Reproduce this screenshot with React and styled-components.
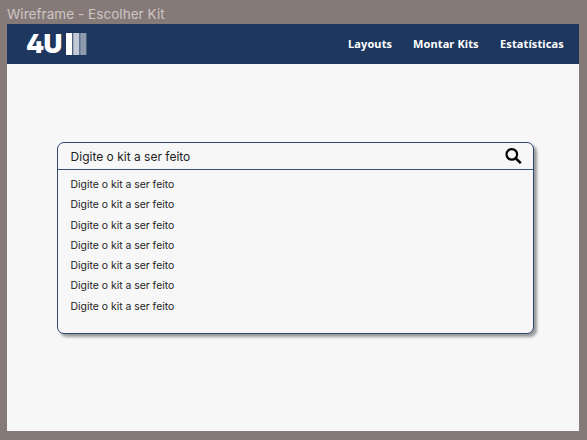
import React from "react";
import styled, { createGlobalStyle } from "styled-components";

const GlobalStyle = createGlobalStyle`
  * { box-sizing: border-box; }
  body { margin: 0; background: #867a79; }
`;

const Canvas = styled.div`
  width: 587px;
  height: 440px;
  padding: 0 8px 9px 7px;
  display: flex;
  flex-direction: column;
  overflow: hidden;
  background: #867a79;
  font-family: Inter, sans-serif;
`;

const FrameTitle = styled.div`
  height: 24px;
  flex: none;
  padding-top: 4px;
  font-size: 13.5px;
  line-height: 20px;
  letter-spacing: 0.05px;
  white-space: nowrap;
  color: #cdc5c4;
`;

const Frame = styled.main`
  flex: 1;
  display: flex;
  flex-direction: column;
  background: #f7f7f7;
`;

const Header = styled.header`
  height: 40px;
  flex: none;
  display: flex;
  align-items: center;
  justify-content: space-between;
  padding: 0 14px 0 19px;
  background: #1e375f;
`;

const Logo = styled.div`
  display: flex;
  align-items: center;
  gap: 4px;
  color: #fff;
`;

const LogoText = styled.span`
  width: 36px;
  font-size: 26px;
  font-weight: 900;
  font-feature-settings: "cv02";
  line-height: 40px;
  letter-spacing: -0.7px;
`;

const Nav = styled.nav`
  display: flex;
  gap: 21px;
`;

const NavLink = styled.a`
  width: ${(p) => p.$width}px;
  font-family: "Noto Sans", sans-serif;
  font-size: 11px;
  font-weight: 700;
  line-height: 40px;
  letter-spacing: 0.12px;
  white-space: nowrap;
  color: #fff;
`;

const SearchPanel = styled.section`
  width: 477px;
  height: 192px;
  margin: 78px 0 0 50px;
  border: 1px solid #2e4773;
  border-radius: 7px;
  box-shadow: 3px 3px 3px rgba(0, 0, 0, 0.38);
  background: #f7f7f7;
`;

const SearchBar = styled.div`
  height: 27px;
  display: flex;
  align-items: center;
  justify-content: space-between;
  padding: 0 11px 0 12.6px;
  border-bottom: 1px solid #365582;
  font-size: 12px;
  color: #222;
`;

const Results = styled.ul`
  margin: 0;
  padding: 5px 12.6px;
  list-style: none;
`;

const Result = styled.li`
  height: 20.25px;
  font-size: 10.4px;
  line-height: 20px;
  color: #222;
`;

const links = [
  { label: "Layouts", width: 44 },
  { label: "Montar Kits", width: 66 },
  { label: "Estatísticas", width: 65 },
];

export default function App() {
  return (
    <Canvas>
      <GlobalStyle />
      <FrameTitle>Wireframe - Escolher Kit</FrameTitle>
      <Frame>
        <Header>
          <Logo>
            <LogoText>4U</LogoText>
            <svg width="21" height="22" viewBox="0 0 21 22" aria-hidden="true">
              <rect width="6.2" height="22" fill="#fff" />
              <rect x="7.2" width="6.2" height="22" fill="#c2c9d4" />
              <rect x="14.2" width="6.2" height="22" fill="#8e9baf" />
            </svg>
          </Logo>
          <Nav>
            {links.map((l) => (
              <NavLink key={l.label} $width={l.width}>{l.label}</NavLink>
            ))}
          </Nav>
        </Header>
        <SearchPanel>
          <SearchBar>
            <span>Digite o kit a ser feito</span>
            <svg width="17" height="16" viewBox="0 0 17 16" fill="none" stroke="#050505" aria-hidden="true">
              <circle cx="6.8" cy="6.4" r="5.3" strokeWidth="2.2" />
              <path d="M10.4 10L15.8 15.2" strokeWidth="2.5" />
            </svg>
          </SearchBar>
          <Results>
            {Array.from({ length: 7 }, (_, i) => (
              <Result key={i}>Digite o kit a ser feito</Result>
            ))}
          </Results>
        </SearchPanel>
      </Frame>
    </Canvas>
  );
}
